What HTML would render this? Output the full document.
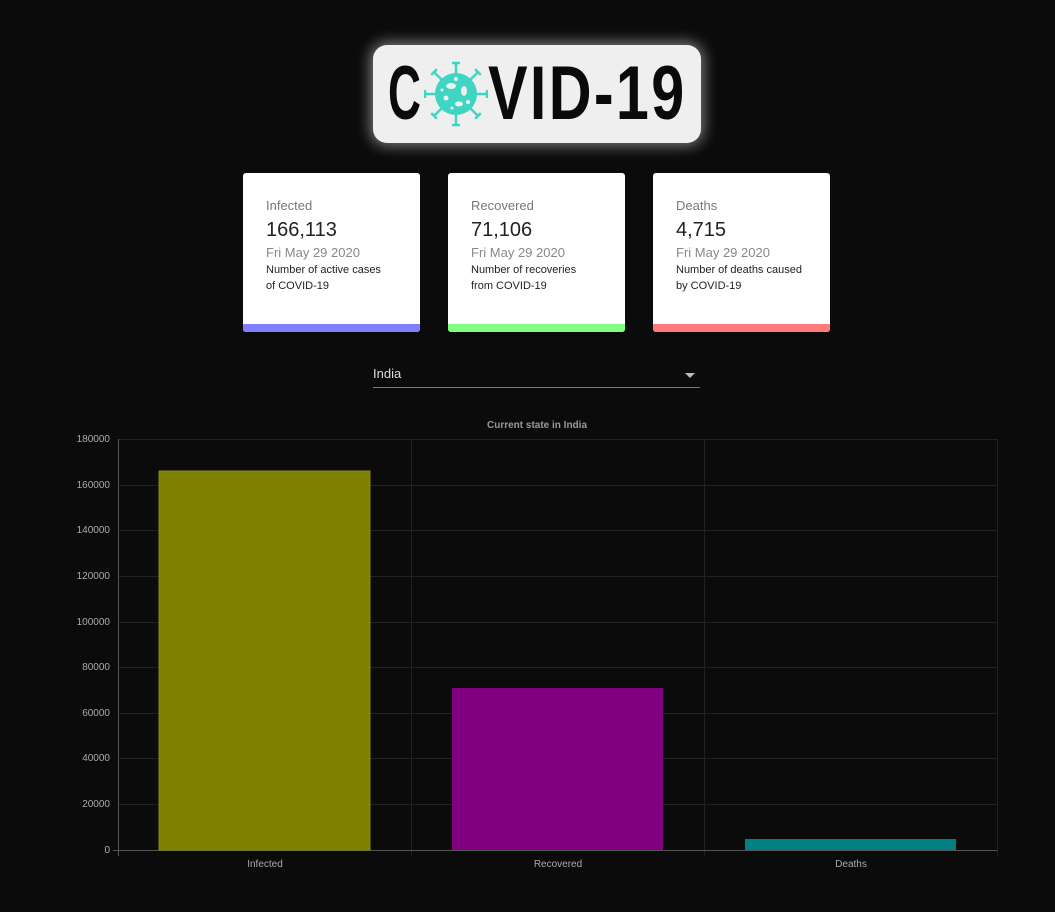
<!DOCTYPE html>
<html><head><meta charset="utf-8"><style>
*{margin:0;padding:0;box-sizing:border-box}
body{width:1055px;height:912px;background:#0b0b0b;font-family:"Liberation Sans",sans-serif;position:relative;overflow:hidden}
.logo{position:absolute;left:373px;top:45px;width:328px;height:98px;background:#efefef;border-radius:14px;box-shadow:0 0 14px 3px rgba(255,255,255,.45)}
.logo span{position:absolute;top:9px;white-space:nowrap;font:bold 76px/80px "Liberation Sans",sans-serif;color:#0a0a0a;letter-spacing:3px;transform-origin:left}
.card{position:absolute;top:173px;width:177px;height:159px;background:#fff;border-radius:3px;overflow:hidden}
.card .in{padding:25px 0 0 23px}
.t{color:#777;font-size:13px}
.n{color:#222;font-size:20px;margin-top:6px}
.d{color:#888;font-size:13px;margin-top:3px}
.x{color:#222;font-size:11px;line-height:16px;margin-top:2px}
.bar{position:absolute;left:0;right:0;bottom:0;height:8px}
.sel{position:absolute;left:373px;top:366px;width:327px;height:22px;border-bottom:1px solid #777;color:#ddd;font-size:13px}
</style></head><body>
<div class="logo">
<span style="left:15px;transform:scaleX(.6)">C</span>
<svg style="position:absolute;left:51px;top:14px" width="64" height="70" viewBox="-32 -35 64 70">
<g stroke="#3fd5c3" stroke-width="2.5" fill="#3fd5c3">
<g id="s"><line x1="0" y1="-20" x2="0" y2="-31"/><line x1="-4" y1="-31" x2="4" y2="-31"/></g>
<use href="#s" transform="rotate(45)"/><use href="#s" transform="rotate(90)"/><use href="#s" transform="rotate(135)"/><use href="#s" transform="rotate(180)"/><use href="#s" transform="rotate(225)"/><use href="#s" transform="rotate(270)"/><use href="#s" transform="rotate(315)"/>
<circle r="21" stroke="none"/></g>
<g fill="#efefef"><ellipse cx="-5" cy="-8" rx="5" ry="3"/><ellipse cx="8" cy="-3" rx="3" ry="5"/><circle cx="-10" cy="4" r="2.5"/><ellipse cx="3" cy="10" rx="4" ry="2.5"/><circle cx="-4" cy="14" r="1.5"/><circle cx="12" cy="8" r="2"/><circle cx="0" cy="-15" r="2"/><circle cx="-14" cy="-4" r="1.5"/></g>
</svg>
<span style="left:115px;transform:scaleX(.78)">VID-19</span>
</div>
<div class="card" style="left:243px"><div class="in"><div class="t">Infected</div><div class="n">166,113</div><div class="d">Fri May 29 2020</div><div class="x">Number of active cases<br>of COVID-19</div></div><div class="bar" style="background:#8080ff"></div></div>
<div class="card" style="left:448px"><div class="in"><div class="t">Recovered</div><div class="n">71,106</div><div class="d">Fri May 29 2020</div><div class="x">Number of recoveries<br>from COVID-19</div></div><div class="bar" style="background:#80ff80"></div></div>
<div class="card" style="left:653px"><div class="in"><div class="t">Deaths</div><div class="n">4,715</div><div class="d">Fri May 29 2020</div><div class="x">Number of deaths caused<br>by COVID-19</div></div><div class="bar" style="background:#ff7b7b"></div></div>
<div class="sel">India<svg style="position:absolute;right:5px;top:7px" width="10" height="6"><path d="M0 0L10 0L5 5Z" fill="#bbb"/></svg></div>
<svg style="position:absolute;left:0;top:0" width="1055" height="912" font-family="Liberation Sans, sans-serif" font-size="10" fill="#aaa">
<text x="537" y="428" text-anchor="middle" font-weight="bold" fill="#999">Current state in India</text>
<g stroke="#222" stroke-width="1">
<line x1="118" y1="439.5" x2="997" y2="439.5"/><line x1="118" y1="485.5" x2="997" y2="485.5"/><line x1="118" y1="530.5" x2="997" y2="530.5"/><line x1="118" y1="576.5" x2="997" y2="576.5"/><line x1="118" y1="622.5" x2="997" y2="622.5"/><line x1="118" y1="667.5" x2="997" y2="667.5"/><line x1="118" y1="713.5" x2="997" y2="713.5"/><line x1="118" y1="758.5" x2="997" y2="758.5"/><line x1="118" y1="804.5" x2="997" y2="804.5"/>
<line x1="411.5" y1="439" x2="411.5" y2="856"/><line x1="704.5" y1="439" x2="704.5" y2="856"/><line x1="997.5" y1="439" x2="997.5" y2="856"/>
</g>
<g stroke="#555"><line x1="118.5" y1="439" x2="118.5" y2="856"/><line x1="113" y1="850.5" x2="997" y2="850.5"/></g>
<rect x="159" y="471" width="211" height="379" fill="#808000" stroke="#8a8a10"/>
<rect x="452" y="688" width="211" height="162" fill="#800080"/>
<rect x="745" y="839" width="211" height="11" fill="#008080"/>
<g text-anchor="end"><text x="110" y="442">180000</text><text x="110" y="488">160000</text><text x="110" y="533">140000</text><text x="110" y="579">120000</text><text x="110" y="625">100000</text><text x="110" y="670">80000</text><text x="110" y="716">60000</text><text x="110" y="761">40000</text><text x="110" y="807">20000</text><text x="110" y="853">0</text></g>
<g text-anchor="middle"><text x="265" y="867">Infected</text><text x="558" y="867">Recovered</text><text x="851" y="867">Deaths</text></g>
</svg>
</body></html>
